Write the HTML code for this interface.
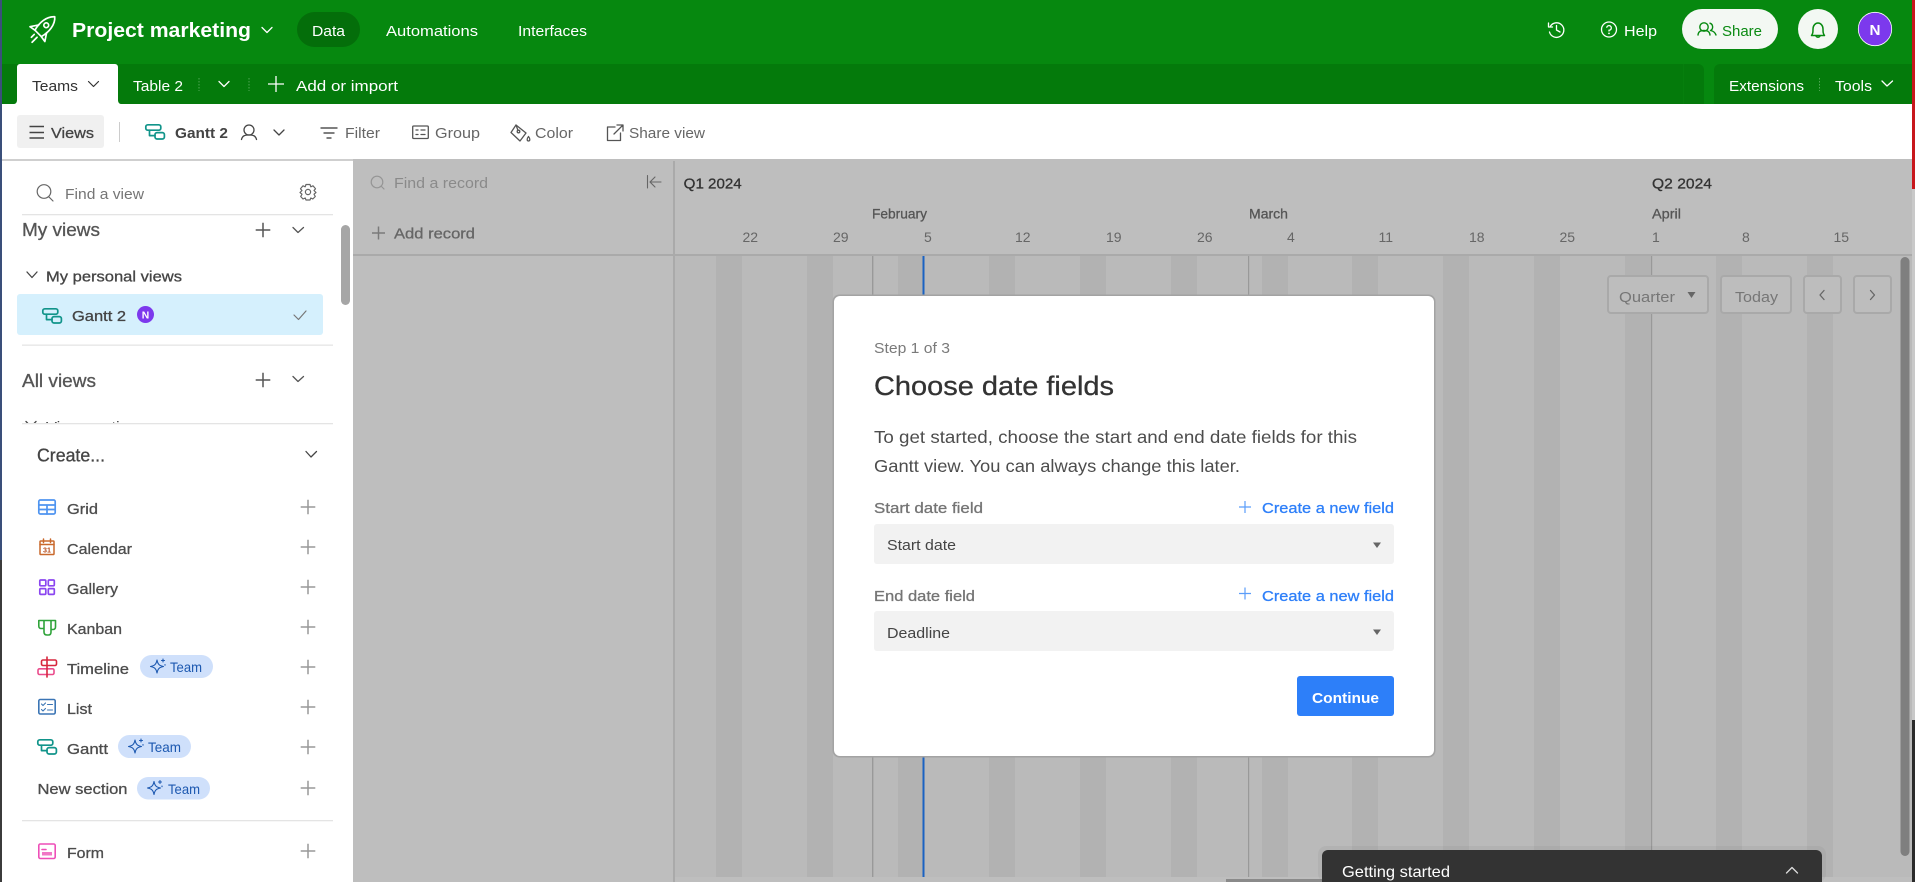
<!DOCTYPE html>
<html lang="en"><head><meta charset="utf-8"><title>Project marketing</title>
<style>
html,body{margin:0;padding:0;width:1915px;height:882px;overflow:hidden;background:#fff}
svg{display:block}
text{font-family:"Liberation Sans",sans-serif;font-size:15px;white-space:pre}
.w{fill:#fff}
.m{stroke:currentColor;stroke-width:.3px}
.i{fill:none;stroke-linecap:round;stroke-linejoin:round}
</style></head><body>
<svg xmlns="http://www.w3.org/2000/svg" width="1915" height="882" viewBox="0 0 1915 882">
<defs>
<g id="plus"><path d="M-7.3 0H7.3M0-7.3V7.3" fill="none" stroke-width="1.5"/></g>
<g id="gantt" class="i" stroke-width="1.7"><rect x="0.8" y="0.8" width="15" height="5.4" rx="2"/><rect x="10" y="8.6" width="9.4" height="6.4" rx="2"/><path d="M4.5 6.2V11.6H10"/></g>
<g id="star" class="i" stroke-width="1.1"><path d="M6.500 2C7.300 6.200 8.700 7.700 13 8.500 8.700 9.300 7.300 10.800 6.500 15 5.700 10.800 4.300 9.300 0 8.500 4.300 7.700 5.700 6.200 6.500 2Z"/><path d="M12.500 1V4M11 2.500H14M14.500 6.500V7.200"/></g>
<clipPath id="vs"><rect x="0" y="400" width="353" height="23"/></clipPath>
</defs>

<!-- page surfaces -->
<rect width="1915" height="882" fill="#fff"/>
<rect width="1915" height="64" fill="#06880f"/>
<rect y="64" width="1915" height="40" fill="#06880f"/>
<path d="M0 64H1698a6 6 0 0 1 6 6V104H0Z" fill="#047a0b"/>
<path d="M1714 104V70a6 6 0 0 1 6-6H1915V104Z" fill="#047a0b"/>
<rect x="1683" y="64" width="1" height="40" fill="#067f0d"/>
<rect y="159" x="0" width="1915" height="2" fill="#cfcfcf"/>
<rect x="353" y="159" width="1562" height="723" fill="#bebebe"/>
<rect x="675" y="256" width="1240" height="621" fill="#bababa"/>

<!-- weekend stripes -->
<g fill="#b2b2b2">
<rect x="716" y="256" width="26" height="621"/><rect x="807" y="256" width="26" height="621"/><rect x="898" y="256" width="26" height="621"/><rect x="989" y="256" width="26" height="621"/><rect x="1080" y="256" width="26" height="621"/><rect x="1171" y="256" width="26" height="621"/><rect x="1262" y="256" width="26" height="621"/><rect x="1352" y="256" width="26" height="621"/><rect x="1443" y="256" width="26" height="621"/><rect x="1534" y="256" width="26" height="621"/><rect x="1625" y="256" width="26" height="621"/><rect x="1716" y="256" width="26" height="621"/><rect x="1807" y="256" width="26" height="621"/>
</g>
<rect x="872" y="256" width="1.4" height="621" fill="#999"/>
<rect x="1248" y="256" width="1.2" height="621" fill="#999"/>
<rect x="1651" y="256" width="1.2" height="621" fill="#999"/>
<rect x="922.5" y="256" width="2" height="621" fill="#1a62c2"/>
<rect x="353" y="254" width="1559" height="2" fill="#aaa"/>
<rect x="673" y="161" width="2" height="721" fill="#aaa"/>
<rect x="1226" y="879" width="100" height="3" fill="#8a8a8a"/>

<!-- edges -->
<rect x="0" y="0" width="2" height="882" fill="#3a4f7a"/>
<rect x="0" y="560" width="2" height="322" fill="#3b3b3b"/>
<rect x="1912" y="0" width="3" height="189" fill="#c8171c"/>
<rect x="1912" y="189" width="3" height="531" fill="#c9c9c9"/>
<rect x="1912" y="720" width="3" height="162" fill="#2a2a2a"/>

<!-- header -->
<g class="i" stroke="#fff" stroke-width="1.7" transform="translate(42 29.500) rotate(45)">
<path d="M0-18C6-13 7-3 4.500 5.500H-4.500C-7-3-6-13 0-18Z"/><circle cx="0" cy="-6" r="2.400"/><path d="M-5.500-1-10.500 6.500-4.500 5.500M5.500-1 10.500 6.500 4.500 5.500M-2 9V13M2 9V16"/>
</g>
<text class="w" x="72" y="37" font-weight="700" style="font-size:20px" textLength="179" lengthAdjust="spacingAndGlyphs">Project marketing</text>
<path class="i" d="M262 27.5 267 32.5 272 27.5" stroke="#fff" stroke-width="1.3"/>
<rect x="297" y="12" width="63" height="35" rx="17.5" fill="#046e0a"/>
<text class="w" x="312" y="36" textLength="33" lengthAdjust="spacingAndGlyphs">Data</text>
<text class="w" x="386" y="36" textLength="92" lengthAdjust="spacingAndGlyphs">Automations</text>
<text class="w" x="518" y="36" textLength="69" lengthAdjust="spacingAndGlyphs">Interfaces</text>
<g class="i" stroke="#fff" stroke-width="1.3"><path d="M1550.5 26A7.3 7.3 0 1 1 1549.5 32"/><path d="M1548.5 23V27H1552.5M1556.5 25.5V30L1560 32"/></g>
<g class="i" stroke="#fff" stroke-width="1.3"><circle cx="1609" cy="29.5" r="7.5"/><path d="M1606.8 27.2A2.3 2.3 0 1 1 1609 30.2V31"/></g><circle cx="1609" cy="33.4" r=".9" fill="#fff"/>
<text class="w" x="1624" y="36" textLength="33" lengthAdjust="spacingAndGlyphs">Help</text>
<rect x="1682" y="9" width="96" height="40" rx="20" fill="#f3f8f3"/>
<g class="i" stroke="#078a10" stroke-width="1.4"><circle cx="1704" cy="27" r="4.2"/><path d="M1698 35C1698.5 31 1701 30.5 1704 30.5 1707 30.5 1709.5 31 1710 35M1710 23.2A4 4 0 0 1 1710.5 30.5C1713 31 1715 32 1716 35"/></g>
<text x="1722" y="36" fill="#0a8a12" textLength="40" lengthAdjust="spacingAndGlyphs">Share</text>
<circle cx="1818" cy="29" r="20" fill="#f3f8f3"/>
<g class="i" stroke="#078a10" stroke-width="1.500"><path d="M1811.500 35.500C1813 33.500 1813 32 1813 29A5 6 0 0 1 1823 29C1823 32 1823 33.500 1824.500 35.500Z"/><path d="M1816 36A2.300 2.300 0 0 0 1820 36"/></g>
<circle cx="1875" cy="29" r="16.7" fill="#7c39ed" stroke="#fff" stroke-width=".8"/>
<text class="w" x="1869.5" y="35" font-weight="700" style="font-size:15px" textLength="11" lengthAdjust="spacingAndGlyphs">N</text>

<!-- tab bar -->
<path d="M14 104C16 104 17 102 17 100V67a3 3 0 0 1 3-3H115a3 3 0 0 1 3 3V100C118 102 119 104 121 104Z" fill="#fff"/>
<text x="32" y="91" fill="#333" textLength="46" lengthAdjust="spacingAndGlyphs">Teams</text>
<path class="i" d="M88.500 81.500 93.500 86.500 98.500 81.500" stroke="#333" stroke-width="1.2"/>
<text class="w" x="133" y="91" textLength="50" lengthAdjust="spacingAndGlyphs">Table 2</text>
<path d="M199 78V91M249 78V91" stroke="#4fa654" stroke-width="1" stroke-dasharray="1.5 1.5"/>
<path class="i" d="M219 81.500 224 86.500 229 81.500" stroke="#fff" stroke-width="1.3"/>
<path d="M268 84H284M276 76V92" stroke="#fff" stroke-width="1.3"/>
<text class="w" x="296" y="91" textLength="102" lengthAdjust="spacingAndGlyphs">Add or import</text>
<text class="w" x="1729" y="91" textLength="75" lengthAdjust="spacingAndGlyphs">Extensions</text>
<path d="M1819.500 78V91" stroke="#4fa654" stroke-width="1" stroke-dasharray="1.500 1.500"/>
<text class="w" x="1835" y="91" textLength="37" lengthAdjust="spacingAndGlyphs">Tools</text>
<path class="i" d="M1882 81 1887 86 1892.500 81" stroke="#fff" stroke-width="1.300"/>

<!-- toolbar -->
<rect x="17" y="115" width="87" height="33" rx="3" fill="#f0f0f0"/>
<path d="M29.500 126.500H44M29.500 132.500H44M29.500 138H44" stroke="#444" stroke-width="1.600"/>
<text class="m" x="51" y="138" fill="#444" color="#444" textLength="43" lengthAdjust="spacingAndGlyphs">Views</text>
<rect x="119" y="122" width="1" height="20" fill="#ccc"/>
<use href="#gantt" x="145" y="124" stroke="#11948a"/>
<text x="175" y="138" fill="#444" font-weight="700" style="font-size:15px" textLength="53" lengthAdjust="spacingAndGlyphs">Gantt 2</text>
<g class="i" stroke="#444" stroke-width="1.300"><circle cx="249" cy="130" r="5"/><path d="M241.500 139.500C242.500 135.500 245 135 249 135 253 135 255.500 135.500 256.500 139.500"/></g>
<path class="i" d="M274 130 279 135 284 130" stroke="#444" stroke-width="1.300"/>
<path d="M320.500 128H337.500M323.500 133H334.500M326.500 138H331.500" stroke="#555" stroke-width="1.500"/>
<text x="345" y="138" fill="#666" textLength="35" lengthAdjust="spacingAndGlyphs">Filter</text>
<g class="i" stroke="#555" stroke-width="1.300"><rect x="412.700" y="126" width="15.600" height="12.500" rx="1"/><path d="M416 130H418M421 130H425M416 134.500H418M421 134.500H425"/></g>
<text x="435" y="138" fill="#666" textLength="45" lengthAdjust="spacingAndGlyphs">Group</text>
<g class="i" stroke="#555" stroke-width="1.300"><path d="M516 125 526 133 520 141 511 132.500Z"/><path d="M516 125 518 130.500"/><circle cx="518.500" cy="131.500" r="1.300"/><path d="M528.500 136.500C530.500 139 530 141 528.500 141 527 141 526.500 139 528.500 136.500Z"/></g>
<text x="535" y="138" fill="#666" textLength="38" lengthAdjust="spacingAndGlyphs">Color</text>
<g class="i" stroke="#555" stroke-width="1.300"><path d="M615 127H607.500V140.500H620.500V133"/><path d="M614 134 622.500 125.500M617 125H623V131"/></g>
<text x="629" y="138" fill="#666" textLength="76" lengthAdjust="spacingAndGlyphs">Share view</text>

<!-- sidebar top -->
<g class="i" stroke="#666" stroke-width="1.200"><circle cx="44" cy="191.500" r="6.800"/><path d="M49 197 53 201"/></g>
<text x="65" y="199" fill="#757575" textLength="79" lengthAdjust="spacingAndGlyphs">Find a view</text>
<g class="i" stroke="#666" stroke-width="1.200"><circle cx="308" cy="192" r="2.600"/><path d="M306 184.500H310L310.800 186.800 313 185.800 315.500 188.800 314 190.500 316 192.500 314 194.200 315.300 196.500 312.800 199 310.800 198 310 200H306L305.200 198 303 199 300.700 196.500 302 194.200 300 192.500 302 190.500 300.500 188.800 303 185.800 305.200 186.800Z"/></g>
<rect x="22" y="214" width="311" height="1.300" fill="#e4e4e4"/>
<text class="m" x="22" y="236" fill="#555" color="#555" style="font-size:18px" textLength="78" lengthAdjust="spacingAndGlyphs">My views</text>
<use href="#plus" x="263" y="230" stroke="#555"/>
<path class="i" d="M293 227.500 298 232.500 303.500 227.500" stroke="#555" stroke-width="1.300"/>
<rect x="341" y="225" width="9" height="80" rx="4.500" fill="#a6a6a6"/>
<path class="i" d="M27 272 32 277.500 37 272" stroke="#444" stroke-width="1.300"/>
<text class="m" x="46" y="281.500" fill="#444" color="#444" textLength="136" lengthAdjust="spacingAndGlyphs">My personal views</text>
<rect x="17" y="294" width="306" height="41" rx="3" fill="#d5f0fd"/>
<use href="#gantt" x="42" y="308" stroke="#11948a"/>
<text class="m" x="72" y="321" fill="#444" color="#444" textLength="54" lengthAdjust="spacingAndGlyphs">Gantt 2</text>
<circle cx="145.500" cy="314.500" r="8.500" fill="#7c39ed"/>
<text class="w" x="141.800" y="318.500" font-weight="700" style="font-size:10px" textLength="7.500" lengthAdjust="spacingAndGlyphs">N</text>
<path class="i" d="M294 315 298.500 319.500 306 311" stroke="#777" stroke-width="1.200"/>
<rect x="22" y="344.500" width="311" height="1.300" fill="#e4e4e4"/>
<text class="m" x="22" y="387" fill="#555" color="#555" style="font-size:18px" textLength="74" lengthAdjust="spacingAndGlyphs">All views</text>
<use href="#plus" x="263" y="380" stroke="#555"/>
<path class="i" d="M293 376.500 298 381.500 303.500 376.500" stroke="#555" stroke-width="1.300"/>
<g clip-path="url(#vs)"><text x="46" y="432" fill="#444" textLength="92" lengthAdjust="spacingAndGlyphs">View section</text><path class="i" d="M26 421.500 31 426.500 36 421.500" stroke="#444" stroke-width="1.300"/></g>
<rect x="22" y="423" width="311" height="1.300" fill="#e4e4e4"/>

<!-- create -->
<text class="m" x="37" y="461.500" fill="#444" color="#444" style="font-size:18px" textLength="68" lengthAdjust="spacingAndGlyphs">Create...</text>
<path class="i" d="M306 451.500 311 457 316.500 451.500" stroke="#444" stroke-width="1.300"/>

<g class="i" stroke="#4f94f0" stroke-width="1.700"><rect x="38.800" y="500" width="16.400" height="14" rx="1.500"/><path d="M39 505H55M39 509.500H55M47 505V514"/></g>
<text class="m" x="67" y="514" fill="#4d4d4d" color="#4d4d4d" textLength="31" lengthAdjust="spacingAndGlyphs">Grid</text>
<use href="#plus" x="308" y="507" stroke="#999"/>

<g class="i" stroke="#c9692c" stroke-width="1.500"><rect x="40" y="541" width="14" height="13.500" rx=".8"/><path d="M40 544.500H54M43.500 539V542.500M50.500 539V542.500"/></g>
<text x="43" y="552.500" fill="#b54a1a" font-weight="700" style="font-size:7px" textLength="8" lengthAdjust="spacingAndGlyphs">31</text>
<text class="m" x="67" y="554" fill="#4d4d4d" color="#4d4d4d" textLength="65" lengthAdjust="spacingAndGlyphs">Calendar</text>
<use href="#plus" x="308" y="547" stroke="#999"/>

<g fill="none" stroke="#8b46f0" stroke-width="1.700"><rect x="39.800" y="580" width="6" height="5.800" rx="1"/><rect x="48.300" y="580" width="6" height="5.800" rx="1"/><rect x="39.800" y="588.600" width="6" height="5.800" rx="1"/><rect x="48.300" y="588.600" width="6" height="5.800" rx="1"/></g>
<text class="m" x="67" y="594" fill="#4d4d4d" color="#4d4d4d" textLength="51" lengthAdjust="spacingAndGlyphs">Gallery</text>
<use href="#plus" x="308" y="587" stroke="#999"/>

<g class="i" stroke="#2fa33a" stroke-width="1.600"><path d="M44 620.500H38.800V626C38.800 627.500 39.800 628.500 41 628.500H44ZM44 620.500H55.500V627C55.500 628.500 54.500 629.500 53 629.500H51V620.500M44 620.500V632C44 634 45 635 47 635H48.500C50 635 51 634 51 632V620.500"/></g>
<text class="m" x="67" y="634" fill="#4d4d4d" color="#4d4d4d" textLength="55" lengthAdjust="spacingAndGlyphs">Kanban</text>
<use href="#plus" x="308" y="627" stroke="#999"/>

<g class="i" stroke-width="1.600"><rect x="38" y="668.800" width="16" height="5.700" rx="1.500" stroke="#ea4b8b"/><path d="M47 657V677" stroke="#d7263d"/><rect x="41.500" y="660" width="15" height="5.500" rx="1.500" stroke="#d7263d"/></g>
<text class="m" x="67" y="674" fill="#4d4d4d" color="#4d4d4d" textLength="62" lengthAdjust="spacingAndGlyphs">Timeline</text>
<rect x="140" y="655" width="73" height="23" rx="11.500" fill="#cfe0fb"/>
<use href="#star" x="150.500" y="658" stroke="#1c58b0"/>
<text x="170" y="672" fill="#1c58b0" style="font-size:14px" textLength="32" lengthAdjust="spacingAndGlyphs">Team</text>
<use href="#plus" x="308" y="667" stroke="#999"/>

<g class="i" stroke="#3b75b5" stroke-width="1.600"><rect x="38.800" y="699.500" width="16.400" height="14.500" rx="1.500"/></g><g class="i" stroke="#3b75b5" stroke-width="1.100"><path d="M41.500 704 43 705.500 45.500 703M41.500 709.500 43 711 45.500 708.500M47.500 704.500H52.500M47.500 710H52.500"/></g>
<text class="m" x="67" y="714" fill="#4d4d4d" color="#4d4d4d" textLength="25" lengthAdjust="spacingAndGlyphs">List</text>
<use href="#plus" x="308" y="707" stroke="#999"/>

<use href="#gantt" x="37" y="739" stroke="#11948a"/>
<text class="m" x="67" y="754" fill="#4d4d4d" color="#4d4d4d" textLength="41" lengthAdjust="spacingAndGlyphs">Gantt</text>
<rect x="118" y="735" width="73" height="23" rx="11.500" fill="#cfe0fb"/>
<use href="#star" x="128.500" y="738" stroke="#1c58b0"/>
<text x="148" y="752" fill="#1c58b0" style="font-size:14px" textLength="33" lengthAdjust="spacingAndGlyphs">Team</text>
<use href="#plus" x="308" y="747" stroke="#999"/>

<text class="m" x="37.500" y="794" fill="#4d4d4d" color="#4d4d4d" textLength="90" lengthAdjust="spacingAndGlyphs">New section</text>
<rect x="137" y="777" width="73" height="22.500" rx="11.200" fill="#cfe0fb"/>
<use href="#star" x="147.500" y="779.500" stroke="#1c58b0"/>
<text x="168" y="794" fill="#1c58b0" style="font-size:14px" textLength="32" lengthAdjust="spacingAndGlyphs">Team</text>
<use href="#plus" x="308" y="788" stroke="#999"/>

<rect x="22" y="820" width="311" height="1.300" fill="#e4e4e4"/>
<g class="i" stroke="#ee4fb8" stroke-width="1.600"><rect x="38.800" y="844" width="16.400" height="14.500" rx="1.500"/><path d="M42 849.500H46"/></g><rect x="42" y="852" width="10" height="3.500" fill="#f078c6"/>
<text class="m" x="67" y="858" fill="#4d4d4d" color="#4d4d4d" textLength="37" lengthAdjust="spacingAndGlyphs">Form</text>
<use href="#plus" x="308" y="851" stroke="#999"/>

<!-- grid side panel -->
<g class="i" stroke="#959595" stroke-width="1.200"><circle cx="377" cy="182" r="5.800"/><path d="M381.500 186.500 384 189"/></g>
<text x="394" y="188" fill="#8a8a8a" textLength="94" lengthAdjust="spacingAndGlyphs">Find a record</text>
<g class="i" stroke="#666" stroke-width="1.100"><path d="M647.500 175.500V188M661 182H650.500M655 177 650 182 655 187"/></g>
<path d="M372 233H385M378.500 226.500V239.500" stroke="#7a7a7a" stroke-width="1.500"/>
<text class="m" x="394" y="238.500" fill="#666" color="#666" textLength="81" lengthAdjust="spacingAndGlyphs">Add record</text>

<!-- timeline header -->
<text class="m" x="683.700" y="188.500" fill="#333" color="#333" textLength="58" lengthAdjust="spacingAndGlyphs">Q1 2024</text>
<text class="m" x="1652" y="188.500" fill="#333" color="#333" textLength="60" lengthAdjust="spacingAndGlyphs">Q2 2024</text>
<g fill="#555">
<text class="m" color="#555" x="872" y="218.500" style="font-size:14px" textLength="55" lengthAdjust="spacingAndGlyphs">February</text>
<text class="m" color="#555" x="1249" y="218.500" style="font-size:14px" textLength="39" lengthAdjust="spacingAndGlyphs">March</text>
<text class="m" color="#555" x="1652" y="218.500" style="font-size:14px" textLength="29" lengthAdjust="spacingAndGlyphs">April</text>
</g>
<g fill="#666">
<text x="742.500" y="242" style="font-size:14px">22</text><text x="833" y="242" style="font-size:14px">29</text><text x="924" y="242" style="font-size:14px">5</text><text x="1015" y="242" style="font-size:14px">12</text><text x="1106" y="242" style="font-size:14px">19</text><text x="1197" y="242" style="font-size:14px">26</text><text x="1287" y="242" style="font-size:14px">4</text><text x="1378.500" y="242" style="font-size:14px">11</text><text x="1469" y="242" style="font-size:14px">18</text><text x="1559.500" y="242" style="font-size:14px">25</text><text x="1652" y="242" style="font-size:14px">1</text><text x="1742" y="242" style="font-size:14px">8</text><text x="1833.500" y="242" style="font-size:14px">15</text>
</g>

<!-- timeline controls -->
<g fill="#bdbdbd" stroke="#a9a9a9" stroke-width="2">
<rect x="1608" y="276" width="100" height="37" rx="3"/><rect x="1721" y="276" width="70" height="37" rx="3"/><rect x="1804" y="276" width="37" height="37" rx="3"/><rect x="1854" y="276" width="37" height="37" rx="3"/>
</g>
<text x="1619" y="302" fill="#767676" textLength="56" lengthAdjust="spacingAndGlyphs">Quarter</text>
<path d="M1687.500 292H1695.500L1691.500 298Z" fill="#666"/>
<text x="1735" y="302" fill="#767676" textLength="43" lengthAdjust="spacingAndGlyphs">Today</text>
<path class="i" d="M1824 290.500 1820 295 1824 299.500M1870.500 290.500 1874.500 295 1870.500 299.500" stroke="#666" stroke-width="1.300"/>
<rect x="1900.500" y="257" width="9" height="599" rx="4.500" fill="#7f7f7f"/>

<!-- modal -->
<rect x="832.500" y="294.500" width="603" height="463" rx="7" fill="#a3a3a3"/>
<rect x="834" y="296" width="600" height="460" rx="6" fill="#fff"/>
<text x="874" y="353" fill="#7a7a7a" textLength="76" lengthAdjust="spacingAndGlyphs">Step 1 of 3</text>
<text class="m" x="874" y="395" fill="#333" color="#333" style="font-size:27px" textLength="240" lengthAdjust="spacingAndGlyphs">Choose date fields</text>
<text x="874" y="443" fill="#4d4d4d" style="font-size:17.500px" textLength="483" lengthAdjust="spacingAndGlyphs">To get started, choose the start and end date fields for this</text>
<text x="874" y="472" fill="#4d4d4d" style="font-size:17.500px" textLength="366" lengthAdjust="spacingAndGlyphs">Gantt view. You can always change this later.</text>
<text class="m" x="874" y="513" fill="#757575" color="#757575" textLength="109" lengthAdjust="spacingAndGlyphs">Start date field</text>
<path d="M1239 507H1251M1245 501V513M1239 593.500H1251M1245 587.500V599.500" stroke="#5b9df9" stroke-width="1.200"/>
<text class="m" x="1262" y="513" fill="#2d7ff9" color="#2d7ff9" textLength="132" lengthAdjust="spacingAndGlyphs">Create a new field</text>
<rect x="874" y="524" width="520" height="40" rx="3" fill="#f2f2f2"/>
<text x="887" y="550" fill="#444" textLength="69" lengthAdjust="spacingAndGlyphs">Start date</text>
<path d="M1373 542.500H1381L1377 548Z" fill="#666"/>
<text class="m" x="874" y="601" fill="#757575" color="#757575" textLength="101" lengthAdjust="spacingAndGlyphs">End date field</text>
<text class="m" x="1262" y="601" fill="#2d7ff9" color="#2d7ff9" textLength="132" lengthAdjust="spacingAndGlyphs">Create a new field</text>
<rect x="874" y="611" width="520" height="40" rx="3" fill="#f2f2f2"/>
<text x="887" y="638" fill="#444" textLength="63" lengthAdjust="spacingAndGlyphs">Deadline</text>
<path d="M1373 629.500H1381L1377 635Z" fill="#666"/>
<rect x="1297" y="676" width="97" height="40" rx="3" fill="#2d7ff9"/>
<text class="w" x="1312" y="703" font-weight="700" style="font-size:15px" textLength="67" lengthAdjust="spacingAndGlyphs">Continue</text>

<!-- getting started -->
<rect x="1318" y="846" width="508" height="36" rx="8" fill="#000" opacity=".04"/>
<path d="M1322 882V856a6 6 0 0 1 6-6H1816a6 6 0 0 1 6 6V882Z" fill="#333"/>
<text class="w" x="1342" y="877" style="font-size:16px" textLength="108" lengthAdjust="spacingAndGlyphs">Getting started</text>
<path class="i" d="M1786.500 873 1792 867.500 1797.500 873" stroke="#ddd" stroke-width="1.300"/>
</svg>
</body></html>
